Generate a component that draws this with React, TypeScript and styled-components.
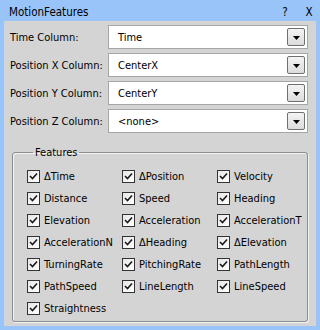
import styled, { createGlobalStyle } from 'styled-components';

const GlobalStyle = createGlobalStyle`
  html, body {
    margin: 0;
    padding: 0;
    background: #ffffff;
  }
  body {
    font-family: 'DejaVu Sans Condensed', Tahoma, 'Liberation Sans', sans-serif;
    font-size: 11px;
    color: #000000;
  }
`;

const Window = styled.div`
  width: 320px;
  height: 330px;
  box-sizing: border-box;
  background: #99c4f9;
  padding: 0 4px 4px 4px;
  display: flex;
  flex-direction: column;
`;

const TitleBar = styled.div`
  height: 21px;
  flex-shrink: 0;
  box-sizing: border-box;
  display: flex;
  align-items: center;
  padding: 2px 0 0 5px;
  font-size: 11.5px;
  color: #000;
`;

const TitleText = styled.span`
  flex: 1;
`;

const TitleButton = styled.span<{ $w: number }>`
  width: ${(p) => p.$w}px;
  text-align: center;
`;

const Body = styled.div`
  flex: 1;
  min-height: 0;
  background: #d4d4d4;
  display: flex;
  flex-direction: column;
  padding: 4px 8px 4px 6px;
`;

const FormRow = styled.div`
  display: flex;
  align-items: center;
  flex-shrink: 0;
  height: 24px;
  margin-bottom: 4px;
`;

const Label = styled.div`
  width: 98px;
  white-space: nowrap;
`;

const Combo = styled.div`
  flex: 1;
  height: 24px;
  box-sizing: border-box;
  border: 1px solid #a6a6a6;
  background: #ffffff;
  display: flex;
  align-items: center;
  padding: 0 2px 0 9px;
`;

const ComboText = styled.span`
  flex: 1;
`;

const DropButton = styled.div`
  width: 18px;
  height: 18px;
  box-sizing: border-box;
  border: 1px solid #707070;
  border-radius: 2px;
  background: linear-gradient(#f4f4f4, #dcdcdc);
  display: flex;
  align-items: center;
  justify-content: center;
  padding-top: 1px;
`;

const Group = styled.fieldset`
  margin: 9px 0 0 2px;
  padding: 11px 0 0 14px;
  flex: 1 1 0;
  min-height: 0;
  min-width: 0;
  border: 1px solid #8c8c8c;
  border-radius: 3px;
  box-shadow: 1px 1px 0 #f4f4f4, inset 1px 1px 0 #f4f4f4;
  display: grid;
  grid-template-columns: 95px 95px 95px;
  grid-auto-rows: 22px;
  align-content: start;
`;

const Legend = styled.legend`
  padding: 0 2px;
  margin-left: 6px;
`;

const CheckItem = styled.label`
  display: flex;
  align-items: flex-start;
  gap: 4px;
  white-space: nowrap;
`;

const Box = styled.span`
  width: 13px;
  height: 13px;
  box-sizing: border-box;
  border: 1px solid #333333;
  background: linear-gradient(135deg, #e6e6e6, #ffffff);
  display: flex;
  align-items: center;
  justify-content: center;
  flex-shrink: 0;
`;

const CheckText = styled.span`
  line-height: 13px;
`;

const columns = [
  { label: 'Time Column:', value: 'Time' },
  { label: 'Position X Column:', value: 'CenterX' },
  { label: 'Position Y Column:', value: 'CenterY' },
  { label: 'Position Z Column:', value: '<none>' },
];

const features = [
  'ΔTime', 'ΔPosition', 'Velocity',
  'Distance', 'Speed', 'Heading',
  'Elevation', 'Acceleration', 'AccelerationT',
  'AccelerationN', 'ΔHeading', 'ΔElevation',
  'TurningRate', 'PitchingRate', 'PathLength',
  'PathSpeed', 'LineLength', 'LineSpeed',
  'Straightness',
];

const Arrow = () => (
  <svg width="7" height="4" viewBox="0 0 7 4">
    <path d="M0 0 H7 L3.5 4 Z" fill="#000" />
  </svg>
);

const Check = () => (
  <svg width="9" height="9" viewBox="0 0 9 9">
    <path d="M1 4 L3.5 6.5 L8 1.5" stroke="#1a1a1a" strokeWidth="1.6" fill="none" />
  </svg>
);

export default function App() {
  return (
    <>
      <GlobalStyle />
      <Window>
        <TitleBar>
          <TitleText>MotionFeatures</TitleText>
          <TitleButton $w={34}>?</TitleButton>
          <TitleButton $w={14}>X</TitleButton>
        </TitleBar>
        <Body>
          {columns.map((c) => (
            <FormRow key={c.label}>
              <Label>{c.label}</Label>
              <Combo>
                <ComboText>{c.value}</ComboText>
                <DropButton>
                  <Arrow />
                </DropButton>
              </Combo>
            </FormRow>
          ))}
          <Group>
            <Legend>Features</Legend>
            {features.map((f) => (
              <CheckItem key={f}>
                <Box>
                  <Check />
                </Box>
                <CheckText>{f}</CheckText>
              </CheckItem>
            ))}
          </Group>
        </Body>
      </Window>
    </>
  );
}
